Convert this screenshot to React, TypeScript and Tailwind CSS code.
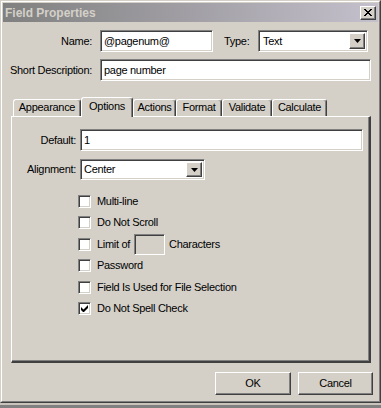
import React from "react";

const sunken =
  "border border-t-[#808080] border-l-[#808080] border-r-white border-b-white shadow-[inset_1px_1px_0_#404040,inset_-1px_-1px_0_#d4d0c8] bg-white";
const raised =
  "border border-t-white border-l-white border-r-[#404040] border-b-[#404040] shadow-[inset_-1px_-1px_0_#808080] bg-[#d4d0c8]";

function Arrow() {
  return (
    <svg width="7" height="4" viewBox="0 0 7 4">
      <path d="M0 0H7L3.5 4Z" fill="#000" />
    </svg>
  );
}

function Check({ checked }: { checked?: boolean }) {
  return (
    <div className={`${sunken} w-[13px] h-[13px] flex items-center justify-center shrink-0`}>
      {checked && (
        <svg width="7" height="7" viewBox="0 0 7 7">
          <path d="M0 2v3l2 2h1l4-4V0L2.5 4.5Z" fill="#000" />
        </svg>
      )}
    </div>
  );
}

function Tab({ label, w, selected }: { label: string; w: string; selected?: boolean }) {
  return (
    <div
      className={`${w} ${
        selected ? "h-[20px] mb-[-1px] z-10 pb-[3px]" : "h-[17px] pb-[1px]"
      } relative bg-[#d4d0c8] border-t border-l border-t-white border-l-white border-r border-r-[#404040] shadow-[inset_-1px_0_0_#808080] rounded-t-[3px] flex items-center justify-center`}
    >
      {label}
    </div>
  );
}

function CbRow({ h, checked, children }: { h: string; checked?: boolean; children: React.ReactNode }) {
  return (
    <div className={`${h} flex items-center pl-[66px]`}>
      <Check checked={checked} />
      <div className="ml-[6px] flex items-center">{children}</div>
    </div>
  );
}

export default function App() {
  return (
    <div
      className="w-[381px] h-[408px] bg-[#808080] overflow-hidden text-[11px] tracking-[-0.3px] text-black leading-none"
      style={{ fontFamily: '"Liberation Sans", Arial, sans-serif' }}
    >
      <div className="h-[403px] border border-t-[#d4d0c8] border-l-[#d4d0c8] border-r-[#404040] border-b-[#404040]">
        <div className="h-full border border-t-white border-l-white border-r-[#808080] border-b-[#808080] bg-[#d4d0c8] p-[1px] flex flex-col">
          {/* Title bar */}
          <div className="h-[19px] bg-linear-to-r from-[#808080] to-[#c4c0cc] flex items-center pl-[2px] pr-[2px]">
            <span className="font-bold text-[12px] tracking-[0px] text-[#d4d0c8]">Field Properties</span>
            <div className={`${raised} ml-auto w-[16px] h-[14px] flex items-center justify-center`}>
              <svg width="8" height="7" viewBox="0 0 8 7">
                <path d="M0 0L7 7M1 0L8 7M7 0L0 7M8 0L1 7" stroke="#000" strokeWidth="1" />
              </svg>
            </div>
          </div>

          {/* Name / Type row */}
          <div className="mt-[8px] flex items-center h-[22px]">
            <div className="w-[89px] text-right">Name:</div>
            <div className={`${sunken} ml-[8px] w-[113px] h-[22px] flex items-center pl-[3px]`}>@pagenum@</div>
            <div className="ml-[11px] w-[34px]">Type:</div>
            <div className={`${sunken} w-[110px] h-[22px] flex items-center pl-[4px] pr-[2px]`}>
              <span>Text</span>
              <div className={`${raised} ml-auto w-[16px] h-[16px] flex items-center justify-center`}>
                <Arrow />
              </div>
            </div>
          </div>

          {/* Short description */}
          <div className="mt-[7px] flex items-center h-[22px]">
            <div className="w-[89px] text-right">Short Description:</div>
            <div className={`${sunken} ml-[8px] w-[271px] h-[22px] flex items-center pl-[3px]`}>page number</div>
          </div>

          {/* Tabs */}
          <div className="mt-[16px] ml-[8px] w-[360px] flex flex-col">
            <div className="h-[19px] flex items-end pl-[2px]">
              <Tab label="Appearance" w="w-[68px]" />
              <Tab label="Options" w="w-[52px]" selected />
              <Tab label="Actions" w="w-[43px]" />
              <Tab label="Format" w="w-[46px]" />
              <Tab label="Validate" w="w-[50px]" />
              <Tab label="Calculate" w="w-[55px]" />
            </div>
            <div className="h-[247px] border-t border-l border-t-white border-l-white border-r-2 border-b-2 border-r-[#404040] border-b-[#404040] shadow-[inset_-1px_-1px_0_#808080] flex flex-col">
              <div className="mt-[12px] flex items-center h-[22px]">
                <div className="w-[64px] text-right">Default:</div>
                <div className={`${sunken} ml-[4px] w-[283px] h-[22px] flex items-center pl-[3px]`}>1</div>
              </div>
              <div className="mt-[8px] flex items-center h-[21px]">
                <div className="w-[64px] text-right">Alignment:</div>
                <div className={`${sunken} ml-[4px] w-[125px] h-[21px] flex items-center pl-[3px] pr-[2px]`}>
                  <span>Center</span>
                  <div className={`${raised} ml-auto w-[16px] h-[15px] flex items-center justify-center`}>
                    <Arrow />
                  </div>
                </div>
              </div>
              <div className="mt-[10px] flex flex-col">
                <CbRow h="h-[22px]">Multi-line</CbRow>
                <CbRow h="h-[21px]">Do Not Scroll</CbRow>
                <CbRow h="h-[22px]">
                  <span>Limit of</span>
                  <div className={`${sunken} ml-[4px] w-[31px] h-[21px]`} style={{ backgroundColor: "#d4d0c8" }} />
                  <span className="ml-[4px]">Characters</span>
                </CbRow>
                <CbRow h="h-[21px]">Password</CbRow>
                <CbRow h="h-[22px]">Field Is Used for File Selection</CbRow>
                <CbRow h="h-[21px]" checked>
                  Do Not Spell Check
                </CbRow>
              </div>
            </div>
          </div>

          {/* Buttons */}
          <div className="mt-[9px] flex justify-end pr-[5px]">
            <div className={`${raised} w-[76px] h-[23px] flex items-center justify-center`}>OK</div>
            <div className={`${raised} ml-[7px] w-[75px] h-[23px] flex items-center justify-center`}>Cancel</div>
          </div>
        </div>
      </div>
      <div className="h-[2px] bg-[#c8c4bc]" />
    </div>
  );
}
